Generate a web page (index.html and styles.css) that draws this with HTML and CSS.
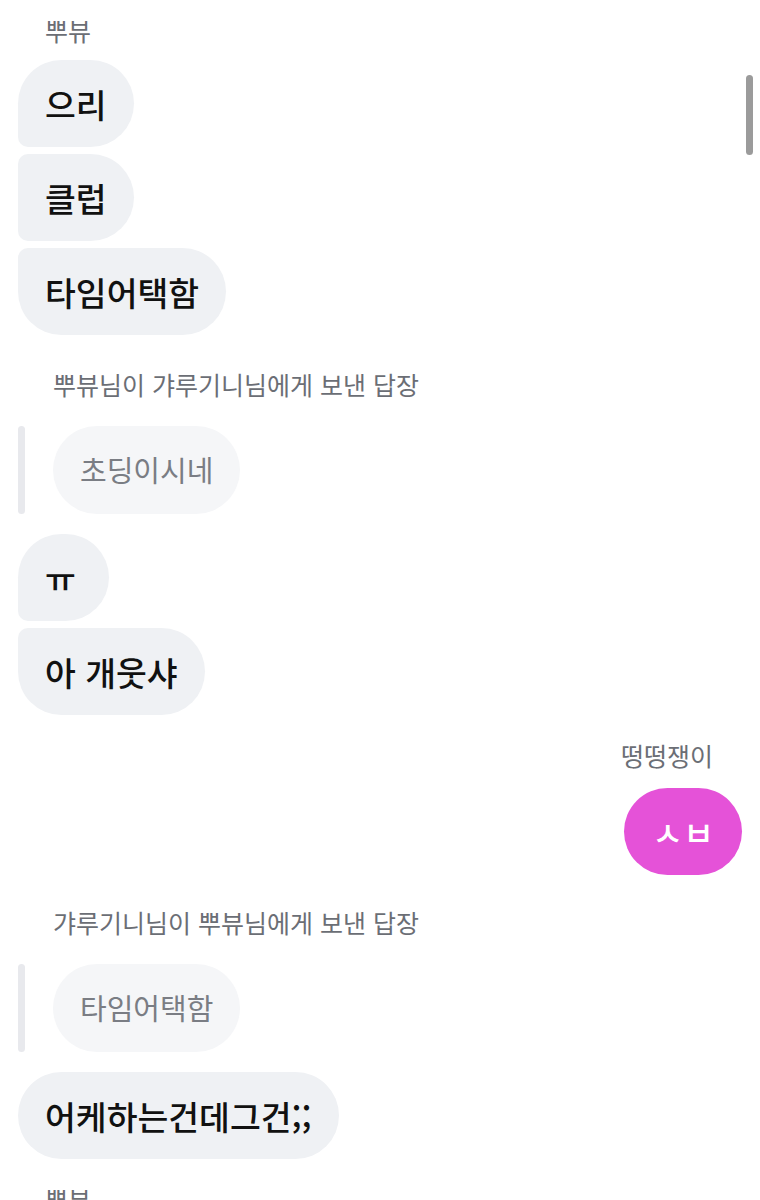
FILE: index.html
```html
<!DOCTYPE html>
<html lang="ko">
<head>
  <meta charset="UTF-8" />
  <meta name="viewport" content="width=device-width, initial-scale=1.0" />
  <title>채팅</title>
  <link rel="stylesheet" href="styles.css">
</head>
<body>
  <div class="chat">
    <div class="sender">뿌뷰</div>
    <div class="group">
      <div class="bubble first">으리</div>
      <div class="bubble middle">클럽</div>
      <div class="bubble last">타임어택함</div>
    </div>

    <div class="reply">
      <div class="reply-label">뿌뷰님이 갸루기니님에게 보낸 답장</div>
      <div class="reply-quote">
        <div class="quote-bar"></div>
        <div class="quote-bubble">초딩이시네</div>
      </div>
    </div>

    <div class="group after-reply">
      <div class="bubble first wide">ㅠ</div>
      <div class="bubble last">아 개웃샤</div>
    </div>

    <div class="sender mine">떵떵쟁이</div>
    <div class="group mine">
      <div class="bubble pink">ㅅㅂ</div>
    </div>

    <div class="reply">
      <div class="reply-label">갸루기니님이 뿌뷰님에게 보낸 답장</div>
      <div class="reply-quote">
        <div class="quote-bar"></div>
        <div class="quote-bubble">타임어택함</div>
      </div>
    </div>

    <div class="group after-reply">
      <div class="bubble">어케하는건데그건;;</div>
    </div>

    <div class="sender">뿌뷰</div>
  </div>

  <div class="scrollbar"></div>
</body>
</html>
```

FILE: styles.css
```css
* {
  box-sizing: border-box;
}

body {
  margin: 0;
  height: 1200px;
  overflow: hidden;
  background: #fff;
  font-family: "Noto Sans CJK KR", "Noto Sans", sans-serif;
  position: relative;
}

.chat {
  display: flex;
  flex-direction: column;
  padding: 14px 18px 0;
}

/* sender names */
.sender {
  font-size: 25px;
  line-height: 32px;
  color: #6b6e75;
  padding-left: 27px;
  margin-bottom: 14px;
}

.sender.mine {
  align-self: flex-end;
  padding-left: 0;
  padding-right: 29px;
  margin-top: 33px;
  margin-bottom: 17px;
}

/* message bubbles */
.group {
  display: flex;
  flex-direction: column;
  align-items: flex-start;
  gap: 7px;
}

.group.mine {
  align-items: flex-end;
  margin-bottom: 31px;
}

.group.after-reply {
  margin-top: 20px;
}

.bubble {
  background: #eff1f4;
  color: #111;
  font-size: 33.5px;
  font-weight: 500;
  line-height: 41px;
  padding: 23px 27px;
  border-radius: 44px;
  white-space: nowrap;
}

.bubble.first {
  border-radius: 44px 44px 44px 10px;
}

.bubble.middle {
  border-radius: 10px 44px 44px 10px;
}

.bubble.last {
  border-radius: 10px 44px 44px 44px;
}

.bubble.wide {
  padding-right: 33px;
}

.bubble.pink {
  background: #e552d8;
  color: #fff;
  padding: 23px 28px;
}

/* replies */
.reply {
  margin-top: 33px;
}

.group.mine + .reply {
  margin-top: 0;
}

.reply-label {
  font-size: 25px;
  line-height: 32px;
  color: #6b6e75;
  padding-left: 35px;
  margin-bottom: 26px;
}

.reply-quote {
  display: flex;
  gap: 28px;
}

.quote-bar {
  width: 7px;
  border-radius: 4px;
  background: #e8e9ed;
}

.quote-bubble {
  background: #f5f6f8;
  color: #7a7d84;
  font-size: 29px;
  line-height: 41px;
  padding: 23px 27px 24px;
  border-radius: 44px;
}

.group.after-reply + .sender {
  margin-top: 24px;
}

.scrollbar {
  position: absolute;
  top: 75px;
  right: 7px;
  width: 7px;
  height: 80px;
  border-radius: 4px;
  background: #9b9b9b;
}
```
